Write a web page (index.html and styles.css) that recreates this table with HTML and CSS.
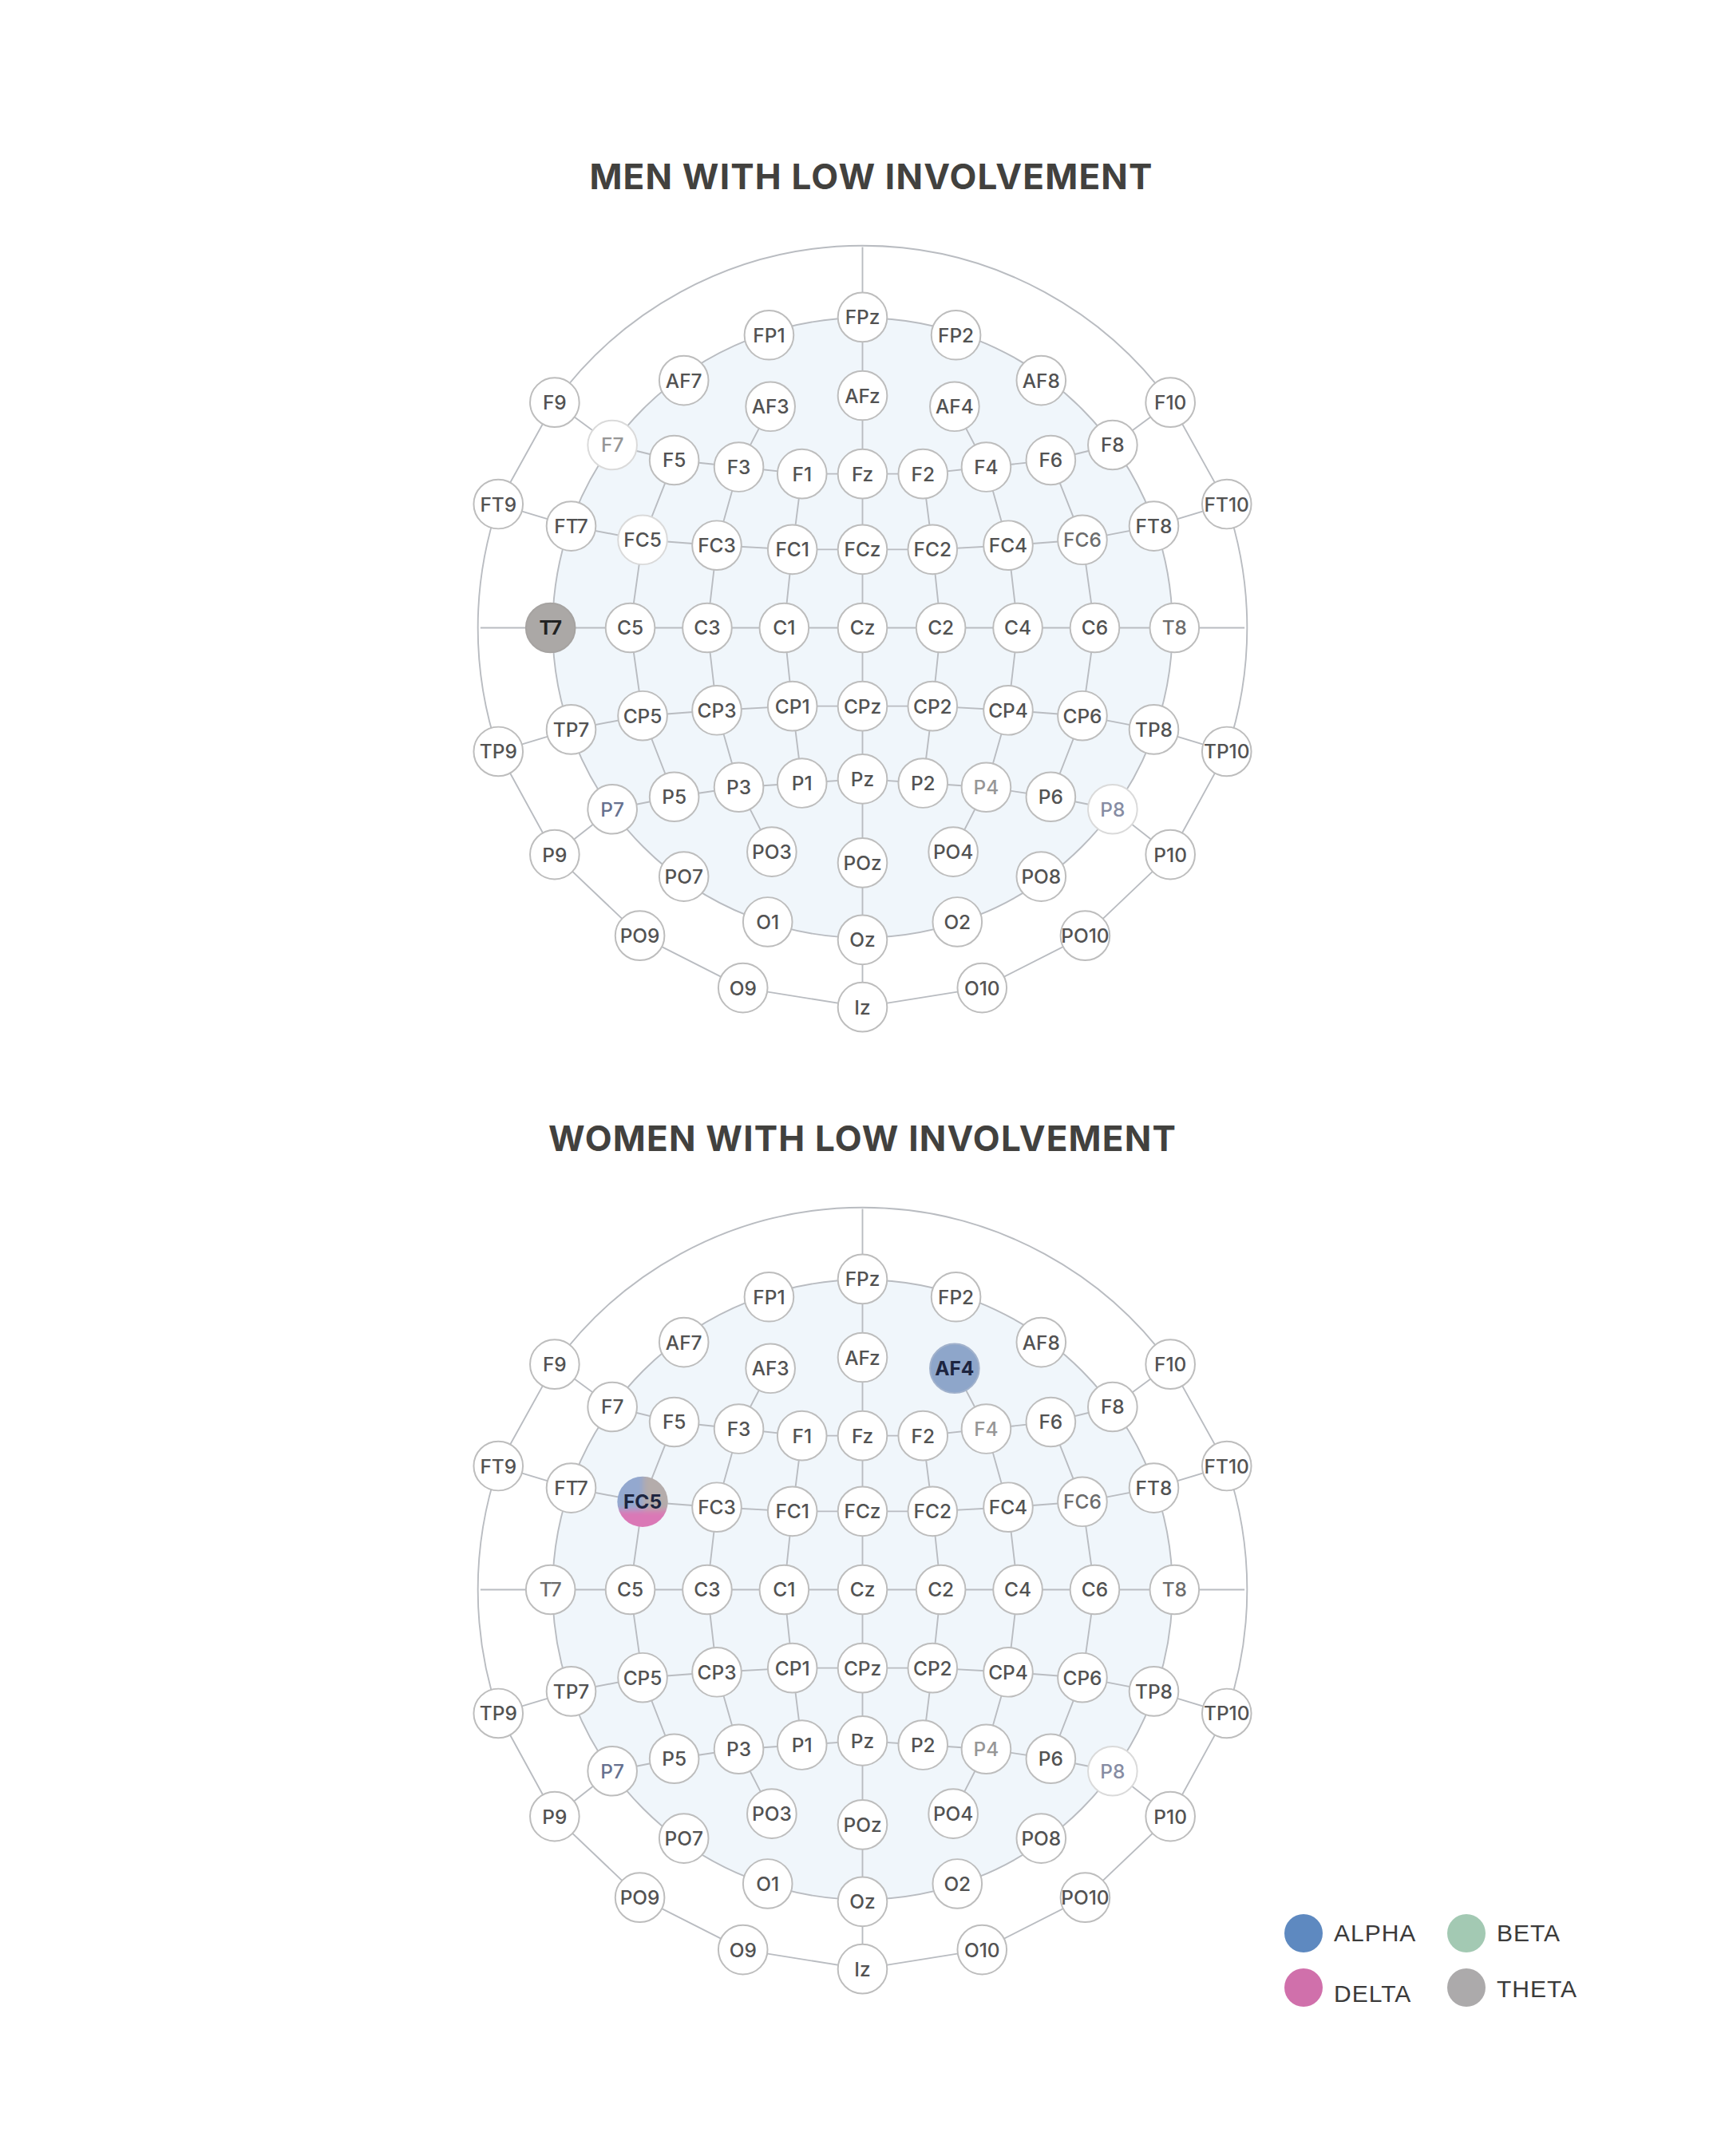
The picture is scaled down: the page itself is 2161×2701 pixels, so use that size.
FILE: index.html
```html
<!DOCTYPE html>
<html lang="en">
<head>
<meta charset="utf-8">
<title>EEG involvement maps</title>
<link rel="stylesheet" href="styles.css">
</head>
<body>
<main class="page">
  <section class="panel">
    <h2 class="panel-title panel-title--men">MEN WITH LOW INVOLVEMENT</h2>
    <div class="panel-row">
      <div class="side"></div>
      <svg class="head" viewBox="-300 -300 600 600" aria-label="Men electrode map">
        <circle class="inner" r="225.5"/>
        <path class="links" d="M-224,-164 A277,277 0 0 1 224,-164 M-265,-90 A280,280 0 0 0 -265,90 M265,-90 A280,280 0 0 1 265,90 M-224,-164 L-265,-90 M224,-164 L265,-90 M-265,90 L-224,165 L-162,224 L-87,262 L0,276 L87,262 L162,224 L224,165 L265,90 M0,-277 V276 M-278,0 H278 M-224,-164 L-182,-133 L-137,-122 L-90,-117 L-44,-112 L0,-112 L44,-112 L90,-117 L137,-122 L182,-133 L224,-164 M-265,-90 L-212,-74 L-160,-64 L-106,-60 L-51,-57 L0,-57 L51,-57 L106,-60 L160,-64 L212,-74 L265,-90 M-265,90 L-212,74 L-160,64 L-106,60 L-51,57 L0,57 L51,57 L106,60 L160,64 L212,74 L265,90 M-224,165 L-182,132 L-137,123 L-90,116 L-44,113 L0,110 L44,113 L90,116 L137,123 L182,132 L224,165 M-44,-112 L-51,-57 L-57,0 L-51,57 L-44,113 M44,-112 L51,-57 L57,0 L51,57 L44,113 M-67,-161 L-90,-117 L-106,-60 L-113,0 L-106,60 L-90,116 L-66,163 M67,-161 L90,-117 L106,-60 L113,0 L106,60 L90,116 L66,163 M-137,-122 L-160,-64 L-169,0 L-160,64 L-137,123 M137,-122 L160,-64 L169,0 L160,64 L137,123"/>
        <g class="nodes">
          <circle cx="0" cy="-226" r="17.9"/><text x="0" y="-220.8">FPz</text>
          <circle cx="0" cy="-169" r="17.9"/><text x="0" y="-163.8">AFz</text>
          <circle cx="0" cy="-112" r="17.9"/><text x="0" y="-106.8">Fz</text>
          <circle cx="0" cy="-57" r="17.9"/><text x="0" y="-51.8">FCz</text>
          <circle cx="0" cy="0" r="17.9"/><text x="0" y="5.2">Cz</text>
          <circle cx="0" cy="57" r="17.9"/><text x="0" y="62.2">CPz</text>
          <circle cx="0" cy="110" r="17.9"/><text x="0" y="115.2">Pz</text>
          <circle cx="0" cy="171" r="17.9"/><text x="0" y="176.2">POz</text>
          <circle cx="0" cy="227" r="17.9"/><text x="0" y="232.2">Oz</text>
          <circle cx="0" cy="276" r="17.9"/><text x="0" y="281.2">Iz</text>

          <circle cx="-68" cy="-213" r="17.9"/><text x="-68" y="-207.8">FP1</text>
          <circle cx="68" cy="-213" r="17.9"/><text x="68" y="-207.8">FP2</text>
          <circle cx="-130" cy="-180" r="17.9"/><text x="-130" y="-174.8">AF7</text>
          <circle cx="130" cy="-180" r="17.9"/><text x="130" y="-174.8">AF8</text>
          <circle cx="-67" cy="-161" r="17.9"/><text x="-67" y="-155.8">AF3</text>
          <circle cx="67" cy="-161" r="17.9"/><text x="67" y="-155.8">AF4</text>

          <circle cx="-224" cy="-164" r="17.9"/><text x="-224" y="-158.8">F9</text>
          <circle cx="224" cy="-164" r="17.9"/><text x="224" y="-158.8">F10</text>
          <circle class="dim" cx="-182" cy="-133" r="17.9"/><text class="faint" x="-182" y="-127.8">F7</text>
          <circle cx="182" cy="-133" r="17.9"/><text x="182" y="-127.8">F8</text>
          <circle cx="-137" cy="-122" r="17.9"/><text x="-137" y="-116.8">F5</text>
          <circle cx="137" cy="-122" r="17.9"/><text x="137" y="-116.8">F6</text>
          <circle cx="-90" cy="-117" r="17.9"/><text x="-90" y="-111.8">F3</text>
          <circle cx="90" cy="-117" r="17.9"/><text x="90" y="-111.8">F4</text>
          <circle cx="-44" cy="-112" r="17.9"/><text x="-44" y="-106.8">F1</text>
          <circle cx="44" cy="-112" r="17.9"/><text x="44" y="-106.8">F2</text>

          <circle cx="-265" cy="-90" r="17.9"/><text x="-265" y="-84.8">FT9</text>
          <circle cx="265" cy="-90" r="17.9"/><text x="265" y="-84.8">FT10</text>
          <circle cx="-212" cy="-74" r="17.9"/><text x="-212" y="-68.8">FT7</text>
          <circle cx="212" cy="-74" r="17.9"/><text x="212" y="-68.8">FT8</text>
          <circle class="dim" cx="-160" cy="-64" r="17.9"/><text x="-160" y="-58.8">FC5</text>
          <circle cx="160" cy="-64" r="17.9"/><text class="soft" x="160" y="-58.8">FC6</text>
          <circle cx="-106" cy="-60" r="17.9"/><text x="-106" y="-54.8">FC3</text>
          <circle cx="106" cy="-60" r="17.9"/><text x="106" y="-54.8">FC4</text>
          <circle cx="-51" cy="-57" r="17.9"/><text x="-51" y="-51.8">FC1</text>
          <circle cx="51" cy="-57" r="17.9"/><text x="51" y="-51.8">FC2</text>

          <circle class="theta" cx="-227" cy="0" r="17.9"/><text class="on" x="-227" y="5.2">T7</text>
          <circle cx="227" cy="0" r="17.9"/><text class="soft" x="227" y="5.2">T8</text>
          <circle cx="-169" cy="0" r="17.9"/><text x="-169" y="5.2">C5</text>
          <circle cx="169" cy="0" r="17.9"/><text x="169" y="5.2">C6</text>
          <circle cx="-113" cy="0" r="17.9"/><text x="-113" y="5.2">C3</text>
          <circle cx="113" cy="0" r="17.9"/><text x="113" y="5.2">C4</text>
          <circle cx="-57" cy="0" r="17.9"/><text x="-57" y="5.2">C1</text>
          <circle cx="57" cy="0" r="17.9"/><text x="57" y="5.2">C2</text>

          <circle cx="-265" cy="90" r="17.9"/><text x="-265" y="95.2">TP9</text>
          <circle cx="265" cy="90" r="17.9"/><text x="265" y="95.2">TP10</text>
          <circle cx="-212" cy="74" r="17.9"/><text x="-212" y="79.2">TP7</text>
          <circle cx="212" cy="74" r="17.9"/><text x="212" y="79.2">TP8</text>
          <circle cx="-160" cy="64" r="17.9"/><text x="-160" y="69.2">CP5</text>
          <circle cx="160" cy="64" r="17.9"/><text x="160" y="69.2">CP6</text>
          <circle cx="-106" cy="60" r="17.9"/><text x="-106" y="65.2">CP3</text>
          <circle cx="106" cy="60" r="17.9"/><text x="106" y="65.2">CP4</text>
          <circle cx="-51" cy="57" r="17.9"/><text x="-51" y="62.2">CP1</text>
          <circle cx="51" cy="57" r="17.9"/><text x="51" y="62.2">CP2</text>

          <circle cx="-224" cy="165" r="17.9"/><text x="-224" y="170.2">P9</text>
          <circle cx="224" cy="165" r="17.9"/><text x="224" y="170.2">P10</text>
          <circle cx="-182" cy="132" r="17.9"/><text class="blue" x="-182" y="137.2">P7</text>
          <circle class="dim" cx="182" cy="132" r="17.9"/><text class="blue faint" x="182" y="137.2">P8</text>
          <circle cx="-137" cy="123" r="17.9"/><text x="-137" y="128.2">P5</text>
          <circle cx="137" cy="123" r="17.9"/><text x="137" y="128.2">P6</text>
          <circle cx="-90" cy="116" r="17.9"/><text x="-90" y="121.2">P3</text>
          <circle cx="90" cy="116" r="17.9"/><text class="faint" x="90" y="121.2">P4</text>
          <circle cx="-44" cy="113" r="17.9"/><text x="-44" y="118.2">P1</text>
          <circle cx="44" cy="113" r="17.9"/><text x="44" y="118.2">P2</text>

          <circle cx="-162" cy="224" r="17.9"/><text x="-162" y="229.2">PO9</text>
          <circle cx="162" cy="224" r="17.9"/><text x="162" y="229.2">PO10</text>
          <circle cx="-130" cy="181" r="17.9"/><text x="-130" y="186.2">PO7</text>
          <circle cx="130" cy="181" r="17.9"/><text x="130" y="186.2">PO8</text>
          <circle cx="-66" cy="163" r="17.9"/><text x="-66" y="168.2">PO3</text>
          <circle cx="66" cy="163" r="17.9"/><text x="66" y="168.2">PO4</text>
          <circle cx="-87" cy="262" r="17.9"/><text x="-87" y="267.2">O9</text>
          <circle cx="87" cy="262" r="17.9"/><text x="87" y="267.2">O10</text>
          <circle cx="-69" cy="214" r="17.9"/><text x="-69" y="219.2">O1</text>
          <circle cx="69" cy="214" r="17.9"/><text x="69" y="219.2">O2</text>
        </g>
      </svg>
      <div class="side"></div>
    </div>
  </section>

  <section class="panel panel--women">
    <h2 class="panel-title">WOMEN WITH LOW INVOLVEMENT</h2>
    <div class="panel-row">
      <div class="side"></div>
      <svg class="head" viewBox="-300 -300 600 600" aria-label="Women electrode map">
        <defs>
          <clipPath id="fc5-clip" clipPathUnits="userSpaceOnUse">
            <circle cx="-160" cy="-64" r="18.4"/>
          </clipPath>
          <filter id="soft-blend" x="-20%" y="-20%" width="140%" height="140%">
            <feGaussianBlur stdDeviation="2.2"/>
          </filter>
        </defs>
        <circle class="inner" r="225.5"/>
        <path class="links" d="M-224,-164 A277,277 0 0 1 224,-164 M-265,-90 A280,280 0 0 0 -265,90 M265,-90 A280,280 0 0 1 265,90 M-224,-164 L-265,-90 M224,-164 L265,-90 M-265,90 L-224,165 L-162,224 L-87,262 L0,276 L87,262 L162,224 L224,165 L265,90 M0,-277 V276 M-278,0 H278 M-224,-164 L-182,-133 L-137,-122 L-90,-117 L-44,-112 L0,-112 L44,-112 L90,-117 L137,-122 L182,-133 L224,-164 M-265,-90 L-212,-74 L-160,-64 L-106,-60 L-51,-57 L0,-57 L51,-57 L106,-60 L160,-64 L212,-74 L265,-90 M-265,90 L-212,74 L-160,64 L-106,60 L-51,57 L0,57 L51,57 L106,60 L160,64 L212,74 L265,90 M-224,165 L-182,132 L-137,123 L-90,116 L-44,113 L0,110 L44,113 L90,116 L137,123 L182,132 L224,165 M-44,-112 L-51,-57 L-57,0 L-51,57 L-44,113 M44,-112 L51,-57 L57,0 L51,57 L44,113 M-67,-161 L-90,-117 L-106,-60 L-113,0 L-106,60 L-90,116 L-66,163 M67,-161 L90,-117 L106,-60 L113,0 L106,60 L90,116 L66,163 M-137,-122 L-160,-64 L-169,0 L-160,64 L-137,123 M137,-122 L160,-64 L169,0 L160,64 L137,123"/>
        <g class="nodes">
          <circle cx="0" cy="-226" r="17.9"/><text x="0" y="-220.8">FPz</text>
          <circle cx="0" cy="-169" r="17.9"/><text x="0" y="-163.8">AFz</text>
          <circle cx="0" cy="-112" r="17.9"/><text x="0" y="-106.8">Fz</text>
          <circle cx="0" cy="-57" r="17.9"/><text x="0" y="-51.8">FCz</text>
          <circle cx="0" cy="0" r="17.9"/><text x="0" y="5.2">Cz</text>
          <circle cx="0" cy="57" r="17.9"/><text x="0" y="62.2">CPz</text>
          <circle cx="0" cy="110" r="17.9"/><text x="0" y="115.2">Pz</text>
          <circle cx="0" cy="171" r="17.9"/><text x="0" y="176.2">POz</text>
          <circle cx="0" cy="227" r="17.9"/><text x="0" y="232.2">Oz</text>
          <circle cx="0" cy="276" r="17.9"/><text x="0" y="281.2">Iz</text>

          <circle cx="-68" cy="-213" r="17.9"/><text x="-68" y="-207.8">FP1</text>
          <circle cx="68" cy="-213" r="17.9"/><text x="68" y="-207.8">FP2</text>
          <circle cx="-130" cy="-180" r="17.9"/><text x="-130" y="-174.8">AF7</text>
          <circle cx="130" cy="-180" r="17.9"/><text x="130" y="-174.8">AF8</text>
          <circle cx="-67" cy="-161" r="17.9"/><text x="-67" y="-155.8">AF3</text>
          <circle class="alpha" cx="67" cy="-161" r="17.9"/><text class="on on--navy" x="67" y="-155.8">AF4</text>

          <circle cx="-224" cy="-164" r="17.9"/><text x="-224" y="-158.8">F9</text>
          <circle cx="224" cy="-164" r="17.9"/><text x="224" y="-158.8">F10</text>
          <circle cx="-182" cy="-133" r="17.9"/><text x="-182" y="-127.8">F7</text>
          <circle cx="182" cy="-133" r="17.9"/><text x="182" y="-127.8">F8</text>
          <circle cx="-137" cy="-122" r="17.9"/><text x="-137" y="-116.8">F5</text>
          <circle cx="137" cy="-122" r="17.9"/><text x="137" y="-116.8">F6</text>
          <circle cx="-90" cy="-117" r="17.9"/><text x="-90" y="-111.8">F3</text>
          <circle cx="90" cy="-117" r="17.9"/><text class="faint" x="90" y="-111.8">F4</text>
          <circle cx="-44" cy="-112" r="17.9"/><text x="-44" y="-106.8">F1</text>
          <circle cx="44" cy="-112" r="17.9"/><text x="44" y="-106.8">F2</text>

          <circle cx="-265" cy="-90" r="17.9"/><text x="-265" y="-84.8">FT9</text>
          <circle cx="265" cy="-90" r="17.9"/><text x="265" y="-84.8">FT10</text>
          <circle cx="-212" cy="-74" r="17.9"/><text x="-212" y="-68.8">FT7</text>
          <circle cx="212" cy="-74" r="17.9"/><text x="212" y="-68.8">FT8</text>
          <g clip-path="url(#fc5-clip)">
            <g filter="url(#soft-blend)">
              <rect class="mix-delta" x="-185" y="-90" width="50" height="55"/>
              <rect class="mix-alpha" x="-185" y="-90" width="25.5" height="32"/>
              <rect class="mix-theta" x="-159.5" y="-90" width="25.5" height="32"/>
            </g>
          </g>
          <text class="on on--navy" x="-160" y="-58.8">FC5</text>
          <circle cx="160" cy="-64" r="17.9"/><text class="soft" x="160" y="-58.8">FC6</text>
          <circle cx="-106" cy="-60" r="17.9"/><text x="-106" y="-54.8">FC3</text>
          <circle cx="106" cy="-60" r="17.9"/><text x="106" y="-54.8">FC4</text>
          <circle cx="-51" cy="-57" r="17.9"/><text x="-51" y="-51.8">FC1</text>
          <circle cx="51" cy="-57" r="17.9"/><text x="51" y="-51.8">FC2</text>

          <circle cx="-227" cy="0" r="17.9"/><text class="soft" x="-227" y="5.2">T7</text>
          <circle cx="227" cy="0" r="17.9"/><text class="soft" x="227" y="5.2">T8</text>
          <circle cx="-169" cy="0" r="17.9"/><text x="-169" y="5.2">C5</text>
          <circle cx="169" cy="0" r="17.9"/><text x="169" y="5.2">C6</text>
          <circle cx="-113" cy="0" r="17.9"/><text x="-113" y="5.2">C3</text>
          <circle cx="113" cy="0" r="17.9"/><text x="113" y="5.2">C4</text>
          <circle cx="-57" cy="0" r="17.9"/><text x="-57" y="5.2">C1</text>
          <circle cx="57" cy="0" r="17.9"/><text x="57" y="5.2">C2</text>

          <circle cx="-265" cy="90" r="17.9"/><text x="-265" y="95.2">TP9</text>
          <circle cx="265" cy="90" r="17.9"/><text x="265" y="95.2">TP10</text>
          <circle cx="-212" cy="74" r="17.9"/><text x="-212" y="79.2">TP7</text>
          <circle cx="212" cy="74" r="17.9"/><text x="212" y="79.2">TP8</text>
          <circle cx="-160" cy="64" r="17.9"/><text x="-160" y="69.2">CP5</text>
          <circle cx="160" cy="64" r="17.9"/><text x="160" y="69.2">CP6</text>
          <circle cx="-106" cy="60" r="17.9"/><text x="-106" y="65.2">CP3</text>
          <circle cx="106" cy="60" r="17.9"/><text x="106" y="65.2">CP4</text>
          <circle cx="-51" cy="57" r="17.9"/><text x="-51" y="62.2">CP1</text>
          <circle cx="51" cy="57" r="17.9"/><text x="51" y="62.2">CP2</text>

          <circle cx="-224" cy="165" r="17.9"/><text x="-224" y="170.2">P9</text>
          <circle cx="224" cy="165" r="17.9"/><text x="224" y="170.2">P10</text>
          <circle cx="-182" cy="132" r="17.9"/><text class="blue" x="-182" y="137.2">P7</text>
          <circle class="dim" cx="182" cy="132" r="17.9"/><text class="blue faint" x="182" y="137.2">P8</text>
          <circle cx="-137" cy="123" r="17.9"/><text x="-137" y="128.2">P5</text>
          <circle cx="137" cy="123" r="17.9"/><text x="137" y="128.2">P6</text>
          <circle cx="-90" cy="116" r="17.9"/><text x="-90" y="121.2">P3</text>
          <circle cx="90" cy="116" r="17.9"/><text class="faint" x="90" y="121.2">P4</text>
          <circle cx="-44" cy="113" r="17.9"/><text x="-44" y="118.2">P1</text>
          <circle cx="44" cy="113" r="17.9"/><text x="44" y="118.2">P2</text>

          <circle cx="-162" cy="224" r="17.9"/><text x="-162" y="229.2">PO9</text>
          <circle cx="162" cy="224" r="17.9"/><text x="162" y="229.2">PO10</text>
          <circle cx="-130" cy="181" r="17.9"/><text x="-130" y="186.2">PO7</text>
          <circle cx="130" cy="181" r="17.9"/><text x="130" y="186.2">PO8</text>
          <circle cx="-66" cy="163" r="17.9"/><text x="-66" y="168.2">PO3</text>
          <circle cx="66" cy="163" r="17.9"/><text x="66" y="168.2">PO4</text>
          <circle cx="-87" cy="262" r="17.9"/><text x="-87" y="267.2">O9</text>
          <circle cx="87" cy="262" r="17.9"/><text x="87" y="267.2">O10</text>
          <circle cx="-69" cy="214" r="17.9"/><text x="-69" y="219.2">O1</text>
          <circle cx="69" cy="214" r="17.9"/><text x="69" y="219.2">O2</text>
        </g>
      </svg>
      <div class="side side--legend">
        <ul class="legend">
          <li class="legend-item"><span class="dot dot--alpha"></span><span class="legend-label">ALPHA</span></li>
          <li class="legend-item"><span class="dot dot--beta"></span><span class="legend-label">BETA</span></li>
          <li class="legend-item"><span class="dot dot--delta"></span><span class="legend-label legend-label--low">DELTA</span></li>
          <li class="legend-item"><span class="dot dot--theta"></span><span class="legend-label legend-label--nudge">THETA</span></li>
        </ul>
      </div>
    </div>
  </section>
</main>
</body>
</html>
```

FILE: styles.css
```css
html, body {
  margin: 0;
  padding: 0;
  background: #ffffff;
}

body {
  width: 2161px;
  min-height: 2701px;
  font-family: Inter, "Liberation Sans", sans-serif;
}

.page {
  padding-top: 191px;
}

.panel-title {
  margin: 0;
  text-align: center;
  font-family: Inter, "Liberation Sans", sans-serif;
  font-weight: 700;
  font-size: 44px;
  line-height: 60px;
  letter-spacing: 1.2px;
  color: #42413e;
}

.panel-title--men {
  padding-left: 22px;
}

.panel--women {
  margin-top: 93px;
}

.panel-row {
  display: grid;
  grid-template-columns: 1fr 1033px 1fr;
  margin-top: 19px;
}

.head {
  display: block;
  width: 1033px;
  height: 1033px;
  overflow: visible;
}

.inner {
  fill: #f0f6fb;
  stroke: #b9bcc1;
  stroke-width: 1.1;
}

.links {
  fill: none;
  stroke: #b9bcc1;
  stroke-width: 1.1;
  stroke-linejoin: round;
}

.nodes circle {
  fill: #ffffff;
  stroke: #bdbdbd;
  stroke-width: 1.15;
}

.nodes circle.dim {
  stroke: #dadada;
}

.nodes text {
  font-family: Inter, "Liberation Sans", sans-serif;
  font-weight: 500;
  font-size: 14.2px;
  text-anchor: middle;
  fill: #525252;
}

.nodes text.soft {
  fill: #6c6c6c;
}

.nodes text.faint {
  fill: #969696;
}

.nodes text.blue {
  fill: #66718f;
}

.nodes text.blue.faint {
  fill: #868ca3;
}

.nodes circle.theta {
  fill: #aba8a6;
  stroke: #a6a3a1;
}

.nodes circle.alpha {
  fill: #8ea6ca;
  stroke: #a2b2cc;
}

.nodes text.on {
  font-weight: 700;
  fill: #222222;
}

.nodes text.on--navy {
  fill: #1d2540;
}

.mix-alpha { fill: #93a8cf; }
.mix-theta { fill: #b4acab; }
.mix-delta { fill: #da78b6; }

.side--legend {
  align-self: end;
  margin-bottom: -6px;
  padding-left: 12px;
}

.legend {
  list-style: none;
  margin: 0;
  padding: 0;
  display: grid;
  grid-template-columns: 204px auto;
  row-gap: 20px;
}

.legend-item {
  display: flex;
  align-items: center;
  gap: 14px;
  height: 48px;
}

.dot {
  flex: none;
  width: 48px;
  height: 48px;
  border-radius: 50%;
}

.dot--alpha { background: #5e89c0; }
.dot--beta { background: #a3c9b3; }
.dot--delta { background: #d070ab; }
.dot--theta { background: #acaaab; }

.legend-label {
  font-family: "Liberation Sans", Arial, sans-serif;
  font-size: 30px;
  line-height: 34px;
  letter-spacing: 1px;
  color: #3b3b3b;
}

.legend-label--low {
  padding-top: 16px;
}

.legend-label--nudge {
  padding-top: 4px;
}
```
